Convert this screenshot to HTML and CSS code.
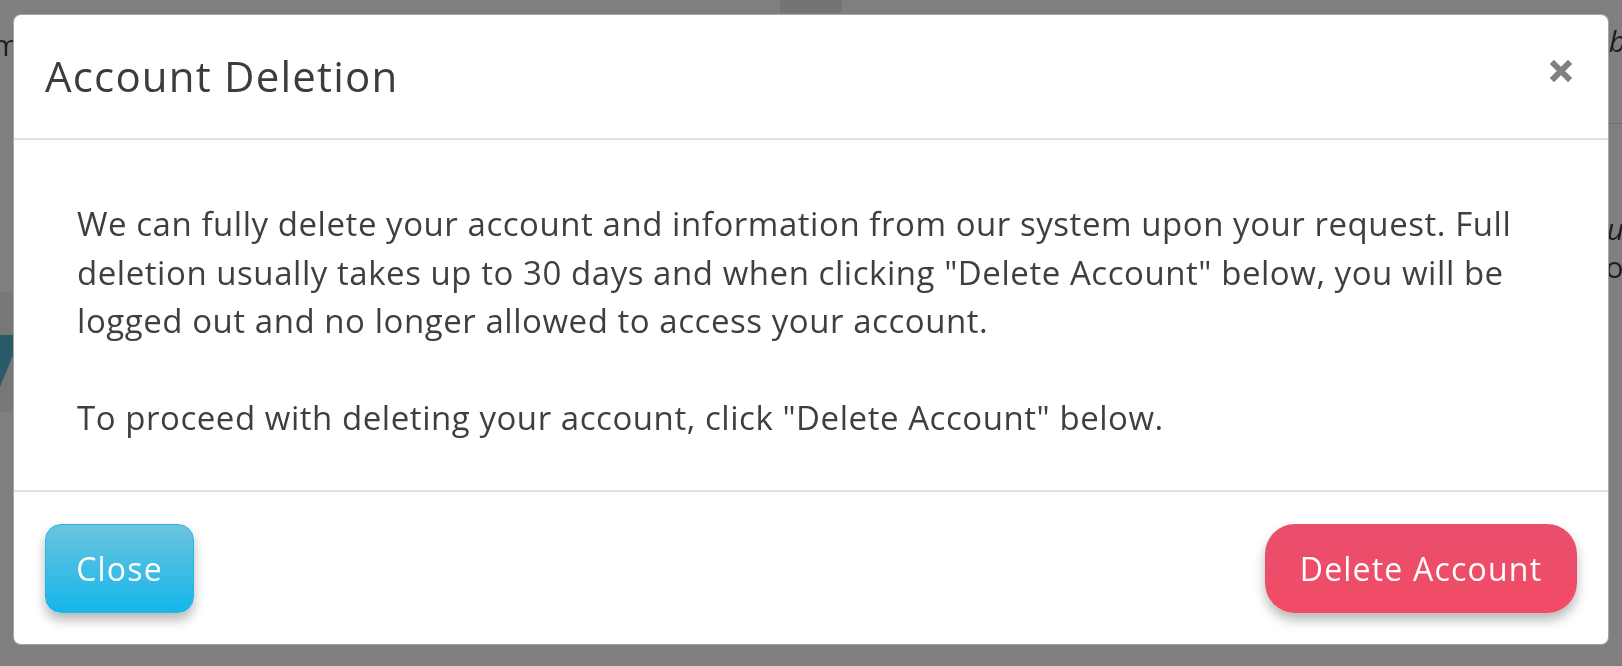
FILE: index.html
```html
<!DOCTYPE html>
<html lang="en">
<head>
    <meta charset="UTF-8">
    <title>Account Deletion</title>
    <link rel="stylesheet" href="styles.css">
</head>
<body>
    <div class="page-behind">
        <span class="behind-text left-m">m</span>
        <span class="behind-text right-b">b</span>
        <span class="behind-text right-ur">ur</span>
        <span class="behind-text right-oc">oc</span>
        <div class="behind-tab"></div>
        <div class="behind-line"></div>
        <div class="behind-band"></div>
        <div class="behind-shape"></div>
    </div>

    <div class="backdrop">
        <div class="modal">
            <div class="modal-header">
                <h2 class="modal-title">Account Deletion</h2>
                <button class="close-x" aria-label="Close">
                    <svg width="22" height="22" viewBox="0 0 22 22">
                        <path d="M4 4 L18 18 M18 4 L4 18" stroke="#808080" stroke-width="6" stroke-linecap="square"/>
                    </svg>
                </button>
            </div>
            <div class="modal-body">
                <p>We can fully delete your account and information from our system upon your request. Full deletion usually takes up to 30 days and when clicking "Delete Account" below, you will be logged out and no longer allowed to access your account.</p>
                <p>To proceed with deleting your account, click "Delete Account" below.</p>
            </div>
            <div class="modal-footer">
                <button class="btn btn-info">Close</button>
                <button class="btn btn-danger">Delete Account</button>
            </div>
        </div>
    </div>
</body>
</html>
```

FILE: styles.css
```css
body {
    margin: 0;
    background: #7f7f7f;
    font-family: 'Open Sans', 'Liberation Sans', sans-serif;
    color: #3f3f3f;
    overflow: hidden;
}

/* page under the dimmed overlay */
.page-behind {
    position: fixed;
    inset: 0;
    background: #7f7f7f;
}

.behind-text {
    position: absolute;
    color: #1e1e1e;
    font-size: 30px;
    font-style: italic;
}

.left-m { left: -8px; top: 24px; font-style: normal; }
.right-b { right: -4px; top: 20px; }
.right-ur { right: -14px; top: 208px; }
.right-oc { right: -16px; top: 246px; font-style: normal; }

.behind-tab {
    position: absolute;
    left: 780px;
    top: 0;
    width: 62px;
    height: 13px;
    background: #747474;
}

.behind-line {
    position: absolute;
    right: 0;
    top: 123px;
    width: 20px;
    height: 1px;
    background: #6f6f6f;
}

.behind-band {
    position: absolute;
    left: 0;
    top: 292px;
    width: 14px;
    height: 120px;
    background: #777;
}

.behind-shape {
    position: absolute;
    left: -30px;
    top: 335px;
    width: 40px;
    height: 55px;
    background: #2b5b69;
    transform: skewX(-22deg);
}

.backdrop {
    position: relative;
    padding: 14px 13px 20px;
}

.modal {
    background: #fff;
    border: 1px solid rgba(0, 0, 0, 0.35);
    border-radius: 8px;
    overflow: hidden;
}

.modal-header {
    height: 123px;
    padding: 0 36px 0 31px;
    display: flex;
    align-items: center;
    justify-content: space-between;
    border-bottom: 2px solid #e1e2e5;
}

.modal-title {
    margin: 0 0 3px;
    font-size: 42px;
    font-weight: 500;
    letter-spacing: 1.2px;
    color: #3c3c3c;
}

.close-x {
    background: none;
    border: 0;
    padding: 0;
    margin-top: -12px;
    cursor: pointer;
    display: flex;
}

.modal-body {
    padding: 60px 63px 47px;
    border-bottom: 2px solid #e1e2e5;
}

.modal-body p {
    margin: 0;
    font-size: 33px;
    line-height: 48.5px;
    letter-spacing: 0.55px;
}

.modal-body p + p {
    margin-top: 48.5px;
}

.modal-footer {
    padding: 32px 31px 31px;
    display: flex;
    justify-content: space-between;
}

.btn {
    height: 89px;
    padding: 0;
    font-family: inherit;
    font-size: 32px;
    letter-spacing: 1.2px;
    color: #fff;
    cursor: pointer;
    box-shadow: 0 7px 12px rgba(0, 0, 0, 0.28);
}

.btn-info {
    width: 149px;
    border: 1px solid #27b4e4;
    border-radius: 16px;
    background: linear-gradient(#6cc3df, #14b7ea);
}

.btn-danger {
    width: 312px;
    border: 0;
    border-radius: 30px;
    background: linear-gradient(#e84f6b, #f24b66);
}
```
